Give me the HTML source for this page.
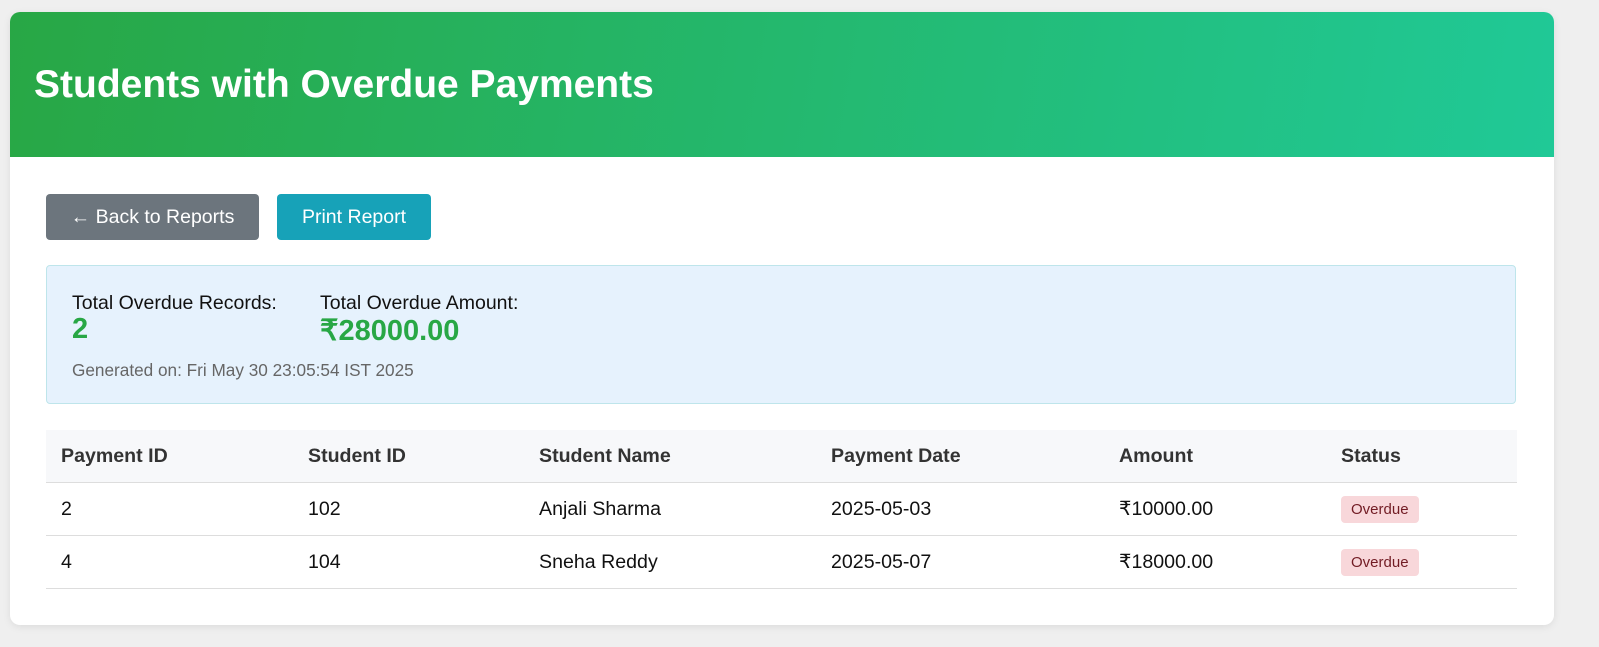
<!DOCTYPE html>
<html><head><style>
body{margin:0;background:#efefef;font-family:"Liberation Sans",Arial,sans-serif;width:1599px;height:647px;overflow:hidden}
.card{position:absolute;left:10px;top:12px;width:1544px;height:613px;background:#fff;border-radius:10px;overflow:hidden;box-shadow:0 2px 8px rgba(0,0,0,.08)}
.hdr{height:145px;background:linear-gradient(100deg,#28a745,#20c997);position:relative}
.hdr h1{margin:0;position:absolute;left:24px;top:51px;color:#fff;font-size:39px;font-weight:bold}
.btn{position:absolute;top:182px;height:46px;line-height:46px;color:#fff;font-size:19.5px;border-radius:4px;text-align:center}
.sum{position:absolute;left:36px;top:253px;width:1468px;height:137px;background:#e6f2fd;border:1px solid #bee5eb;border-radius:4px}
.lbl{position:absolute;top:26px;font-size:19.5px;color:#111}
.val{position:absolute;top:47px;font-size:29px;font-weight:bold;color:#28a745}
.gen{position:absolute;left:25px;top:94px;font-size:17.2px;color:#666}
table{position:absolute;left:36px;top:418px;width:1471px;border-collapse:collapse;font-size:19.6px}
th{background:#f7f8fa;text-align:left;height:52px;padding:0 15px;color:#333;border-bottom:1px solid #ddd}
td{height:52px;padding:0 15px;border-bottom:1px solid #ddd;color:#111}
.b{display:inline-block;background:#f8d7da;color:#721c24;font-size:15px;padding:5px 10px;border-radius:4px}
</style></head><body>
<div class="card">
<div class="hdr"><h1>Students with Overdue Payments</h1></div>
<div class="btn" style="left:36px;width:213px;background:#6c757d">← Back to Reports</div>
<div class="btn" style="left:267px;width:154px;background:#17a2b8">Print Report</div>
<div class="sum">
<div class="lbl" style="left:25px">Total Overdue Records:</div>
<div class="val" style="left:25px">2</div>
<div class="lbl" style="left:273px">Total Overdue Amount:</div>
<div class="val" style="left:273px">₹28000.00</div>
<div class="gen">Generated on: Fri May 30 23:05:54 IST 2025</div>
</div>
<table>
<tr><th style="width:217px">Payment ID</th><th style="width:201px">Student ID</th><th style="width:262px">Student Name</th><th style="width:258px">Payment Date</th><th style="width:192px">Amount</th><th>Status</th></tr>
<tr><td>2</td><td>102</td><td>Anjali Sharma</td><td>2025-05-03</td><td>₹10000.00</td><td><span class="b">Overdue</span></td></tr>
<tr><td>4</td><td>104</td><td>Sneha Reddy</td><td>2025-05-07</td><td>₹18000.00</td><td><span class="b">Overdue</span></td></tr>
</table>
</div>
</body></html>
